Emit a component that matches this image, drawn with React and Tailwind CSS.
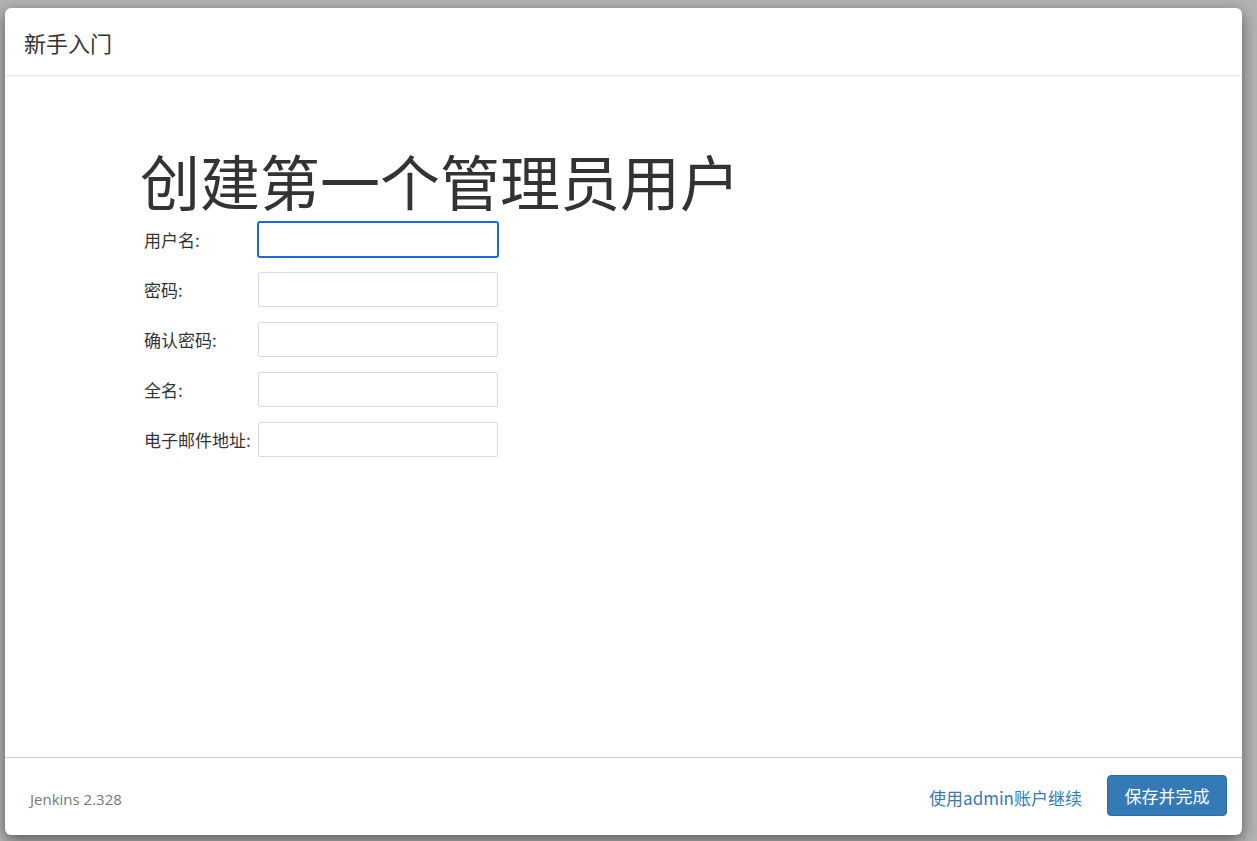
import React from "react";

const fields = [
  { label: "用户名:", focused: true },
  { label: "密码:" },
  { label: "确认密码:" },
  { label: "全名:" },
  { label: "电子邮件地址:" },
];

export default function App() {
  return (
    <div
      className="w-[1257px] h-[841px] bg-[#b3b3b3] pt-[8px] pl-[5px] overflow-hidden"
      style={{ fontFamily: '"Noto Sans CJK SC", "Noto Sans", sans-serif' }}
    >
      <div className="w-[1237px] h-[827px] bg-white rounded-[6px] shadow-[0_5px_15px_rgba(0,0,0,0.5)] flex flex-col">
        <div className="h-[68px] border-b border-[#e5e5e5] flex items-center px-[19px] shrink-0">
          <h4 className="text-[22px] text-[#333] leading-none">新手入门</h4>
        </div>
        <div className="flex-1 pt-[66px] pl-[135px]">
          <h1 className="text-[60px] leading-[76px] text-[#333]">
            创建第一个管理员用户
          </h1>
          <div className="flex flex-col gap-[14px] mt-[3px] pl-[4px]">
            {fields.map((f) => (
              <div key={f.label} className="flex items-center h-[36px]">
                <label className="w-[114px] text-[17px] text-[#333] leading-none whitespace-nowrap">
                  {f.label}
                </label>
                {f.focused ? (
                  <div className="w-[242px] h-[37px] -ml-[1px] rounded-[3px] border-2 border-[#1a6bd8] bg-white" />
                ) : (
                  <div className="w-[240px] h-[35px] rounded-[2px] border border-[#d9d9d9] bg-white" />
                )}
              </div>
            ))}
          </div>
        </div>
        <div className="h-[78px] border-t border-[#cccccc] flex items-center pl-[25px] pr-[15px] shrink-0">
          <span
            className="text-[15px] text-[#777] mt-[6px]"
            style={{ fontFamily: '"Open Sans", "Noto Sans", sans-serif' }}
          >
            Jenkins 2.328
          </span>
          <div className="flex-1" />
          <a className="text-[17px] text-[#337ab7] mr-[25px] mt-[2px] leading-none">
            使用admin账户继续
          </a>
          <button className="w-[120px] h-[41px] bg-[#337ab7] border border-[#2e6da4] rounded-[4px] text-white text-[17px] leading-none -mt-[2px]">
            保存并完成
          </button>
        </div>
      </div>
    </div>
  );
}
